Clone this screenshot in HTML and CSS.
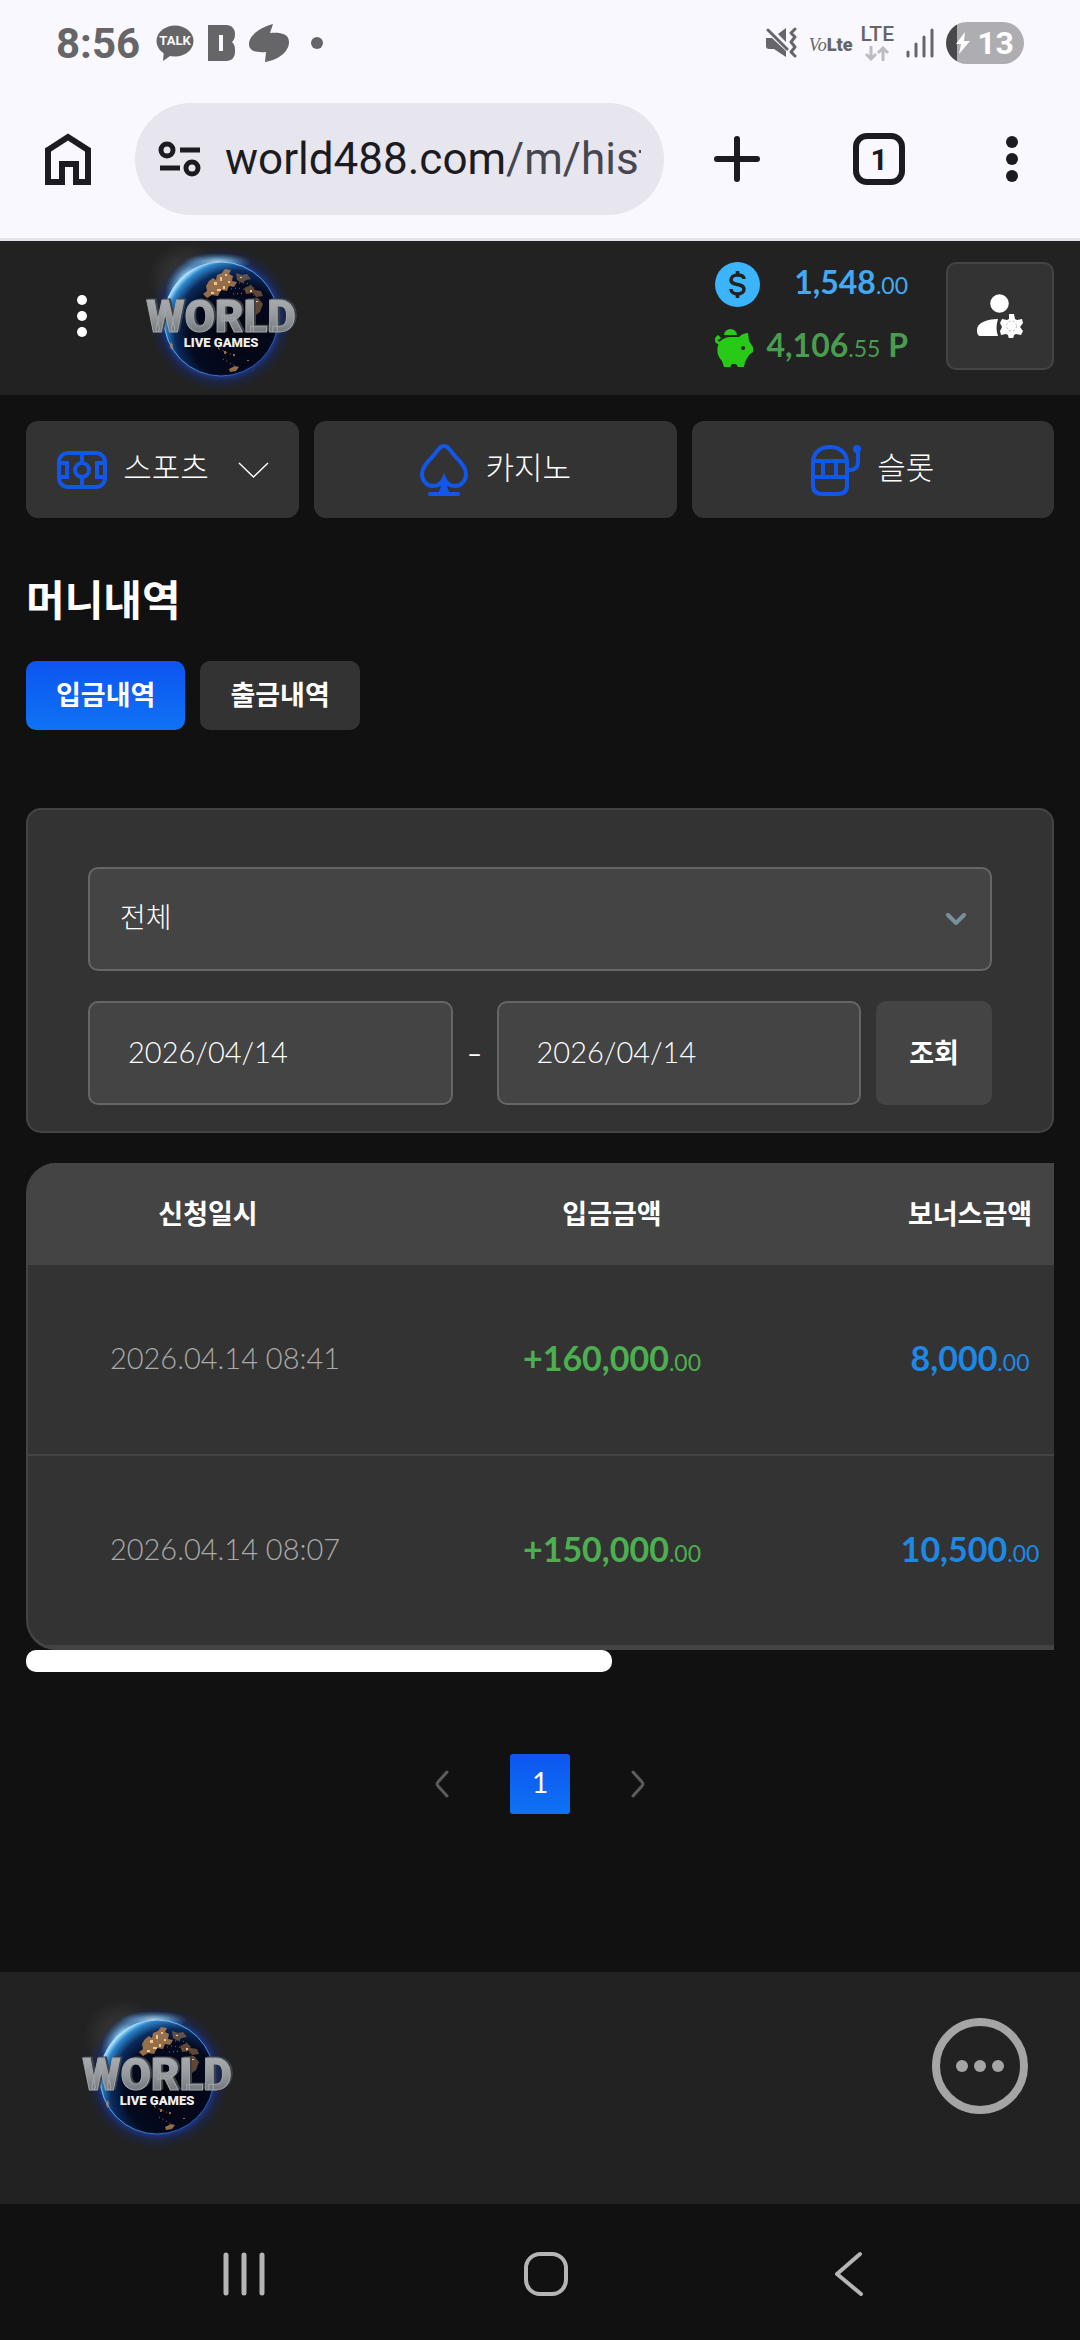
FILE: index.html
```html
<!DOCTYPE html>
<html lang="ko">
<head>
<meta charset="utf-8">
<meta name="viewport" content="width=device-width, initial-scale=1">
<title>머니내역</title>
<link rel="stylesheet" href="styles.css">
</head>
<body>
<svg class="defs" width="0" height="0" aria-hidden="true">
  <defs>
    <radialGradient id="glow"><stop offset=".78" stop-color="#1c3fa8" stop-opacity=".85"/><stop offset=".88" stop-color="#16286a" stop-opacity=".4"/><stop offset="1" stop-color="#16286a" stop-opacity="0"/></radialGradient>
    <radialGradient id="shine"><stop offset="0" stop-color="#f4fff8"/><stop offset=".4" stop-color="#8fd0ee" stop-opacity=".8"/><stop offset="1" stop-color="#4a9ad8" stop-opacity="0"/></radialGradient>
    <radialGradient id="halo"><stop offset="0" stop-color="#fff" stop-opacity=".14"/><stop offset="1" stop-color="#fff" stop-opacity="0"/></radialGradient>
    <radialGradient id="earth" cx=".64" cy=".62" r=".68"><stop offset="0" stop-color="#02030c"/><stop offset=".62" stop-color="#040a20"/><stop offset=".8" stop-color="#0a2a5c"/><stop offset=".93" stop-color="#2d86cc"/><stop offset="1" stop-color="#b8ecff"/></radialGradient>
    <linearGradient id="steel" x1="0" y1="0" x2="0" y2="1"><stop offset="0" stop-color="#b4b6b8"/><stop offset=".5" stop-color="#94989c"/><stop offset="1" stop-color="#596268"/></linearGradient>
    <linearGradient id="rim" x1="0" y1="0" x2="1" y2="1"><stop offset="0" stop-color="#d8f6ff"/><stop offset=".4" stop-color="#5cb2ee"/><stop offset="1" stop-color="#1c3c9c"/></linearGradient>
  </defs>
  <symbol id="globe" viewBox="0 0 160 150">
    <circle cx="45" cy="38" r="38" fill="url(#halo)"/>
    <circle cx="80" cy="78" r="72" fill="url(#glow)"/>
    <ellipse cx="47" cy="39" rx="17" ry="29" transform="rotate(43 47 39)" fill="url(#shine)"/>
    <ellipse cx="77" cy="21" rx="34" ry="9" fill="url(#shine)" opacity=".75"/>
    <circle cx="80" cy="78" r="57" fill="url(#earth)" stroke="url(#rim)" stroke-width="1"/>
    <g fill="#b98652">
      <path d="M68 40l4-3 3 2 1-5 5-2 3-4 6 1-2 4 4 2-1 5 5 1-3 5-5-1-2 5-6-1-3 6-6-1-5 3-4-4 4-3-1-5z" opacity=".8"/>
      <path d="M95 32l6 2 5-1 4 5-5 1-4 3-5-3zM103 47l7-3 4 5 6 1 2 5-7 1-3-4-7 1zM108 58l9-1 5 6-3 8-7 5-4-7z" opacity=".5"/>
      <path d="M88 128l6-3 4 1-3 4-6 1zM83 110h2v3h-2zM92 113h2v2h-2zM77 106h1v2h-1zM106 119h2v1h-2zM30 101l2 3-1 5-2-3z" opacity=".8"/>
    </g>
    <g fill="#f1c48b"><path d="M73 41h3v3h-3zM79 36h2v4h-2zM84 33h2v2h-2zM76 48h4v2h-4zM87 40h2v2h-2zM70 51h3v2h-3zM99 36h2v1h-2zM109 49h2v2h-2zM112 65h2v2h-2zM115 60h2v1h-2zM82 45h2v3h-2z"/></g>
    <g fill="none" stroke="#a3784c" stroke-width="1" stroke-dasharray="1 3"><path d="M90 48q15-4 28 12M94 43q13-4 20 5M92 53l12-1M78 108l18 8M84 104l14-2M82 118l12 7"/></g>
  </symbol>
</svg>

<header class="browser">
  <div class="status">
    <div class="status-left">
      <span class="clock">8:56</span>
      <svg width="38" height="38" viewBox="0 0 38 38"><ellipse cx="19" cy="17" rx="18.500" ry="15.500" fill="#666668"/><path d="M8 26L7 37l10-7z" fill="#666668"/><text class="talk" x="19" y="21" text-anchor="middle">TALK</text></svg>
      <svg width="27" height="38" viewBox="0 0 27 38"><path fill="#666668" fill-rule="evenodd" d="M0 1h18c6 0 9 4 9 9 0 4-1 6-3 8 2 2 3 4 3 8v2c0 5-3 9-9 9H0zM11 11v16h4V11z"/></svg>
      <svg width="40" height="38" viewBox="0 0 40 38"><path fill="#666668" d="M24 0C12 3 0 11 0 20c0 7 7 9 17 8l-1 10c13-2 24-10 24-20 0-8-8-10-19-9z"/></svg>
      <svg class="more-dot" width="12" height="12" viewBox="0 0 12 12"><circle cx="6" cy="6" r="6" fill="#666668"/></svg>
    </div>
    <div class="status-right">
      <svg width="31" height="32" viewBox="0 0 31 32"><g fill="#666668"><path d="M20 1v14L12 7z"/><path d="M0 11h6l14 13v6L8 22H3q-3 0-3-3z"/></g><path d="M3 4l19 18" stroke="#f9f8ff" stroke-width="5"/><path d="M2 3l19 19" stroke="#666668" stroke-width="3" stroke-linecap="round"/><path d="M29 2l-4 4 4 4-4 5 4 5-4 5 4 4" fill="none" stroke="#666668" stroke-width="3" stroke-linecap="round" stroke-linejoin="round"/></svg>
      <span class="volte"><i>Vo</i><b>Lte</b></span>
      <span class="lte">LTE
        <svg width="26" height="15" viewBox="0 0 26 15"><path d="M7 0v12M2 8l5 5 5-5M19 15V2M14 7l5-5 5 5" fill="none" stroke="#bdbcc3" stroke-width="3"/></svg>
      </span>
      <svg width="28" height="30" viewBox="0 0 28 30"><path d="M2 24v4M10 16v12M18 9v19M26 2v26" stroke="#666668" stroke-width="3" stroke-linecap="round"/></svg>
      <span class="battery"><svg width="14" height="22" viewBox="0 0 14 22"><path d="M9 0L0 12h5L3 22 14 9H8z" fill="#fff"/></svg>13</span>
    </div>
  </div>
  <div class="toolbar">
    <button class="tool" aria-label="홈"><svg width="46" height="52" viewBox="0 0 46 52"><path d="M3 17L23 4l20 13v32H31V31H17v18H3z" fill="none" stroke="#1b1b21" stroke-width="6"/></svg></button>
    <a class="address" href="#">
      <svg width="43" height="38" viewBox="0 0 43 38"><g fill="none" stroke="#1b1b21" stroke-width="5"><circle cx="9" cy="10" r="6"/><circle cx="34" cy="28" r="6"/><path d="M22 10h20M2 28h20"/></g></svg>
      <span class="url">world488.com<span class="path">/m/history</span></span>
    </a>
    <div class="tool-group">
      <button class="tool" aria-label="새 탭"><svg width="46" height="46" viewBox="0 0 46 46"><path d="M23 3v40M3 23h40" stroke="#1b1b21" stroke-width="6" stroke-linecap="round"/></svg></button>
      <button class="tab-count" aria-label="탭">1</button>
      <button class="tool" aria-label="메뉴"><svg width="12" height="48" viewBox="0 0 12 48"><g fill="#1b1b21"><circle cx="6" cy="7" r="6"/><circle cx="6" cy="24" r="6"/><circle cx="6" cy="41" r="6"/></g></svg></button>
    </div>
  </div>
</header>

<div class="site-header">
  <button class="menu" aria-label="전체 메뉴"><svg width="12" height="44" viewBox="0 0 12 44"><g fill="#fff"><circle cx="6" cy="6" r="5"/><circle cx="6" cy="22" r="5"/><circle cx="6" cy="38" r="5"/></g></svg></button>
  <a class="logo" href="#">
    <svg width="160" height="150" viewBox="0 0 160 150"><use href="#globe"/><text class="logo-word" x="80" y="91" text-anchor="middle">WORLD</text><text class="logo-sub" x="80" y="106" text-anchor="middle">LIVE GAMES</text></svg>
  </a>
  <div class="balances">
    <div class="balance cash">
      <svg width="45" height="45" viewBox="0 0 45 45"><circle cx="22.500" cy="22.500" r="22.500" fill="#3cb4fb"/><path d="M29 17c0-3-3-4-6.500-4S16 15 16 18c0 6 13 3 13 9 0 3-3 5-6.500 5S16 30 16 27M22.500 9v5M22.500 31v5" fill="none" stroke="#222" stroke-width="3.600"/></svg>
      <span>1,548<small>.00</small></span>
    </div>
    <div class="balance point">
      <svg width="38" height="40" viewBox="0 0 38 40"><path d="M9 7a6.500 6 0 0 1 13 0z" fill="#29c917"/><path d="M5 15C1 15 0 11 3 9l2 2" fill="none" stroke="#29c917" stroke-width="3"/><path fill="#29c917" fill-rule="evenodd" d="M4 15c3-5 8-6 13-6h7c3-3 6-4 9-4l1 8 4 6v5l-4 3-4 7-1 5h-6l-2-3h-4l-2 3H9l-2-6c-5-5-6-12-3-18zM28 18a2 2 0 1 0 .1 4 2 2 0 0 0 0-4z"/></svg>
      <span>4,106<small>.55</small> P</span>
    </div>
  </div>
  <button class="account" aria-label="내 정보"><svg width="46" height="44" viewBox="0 0 46 44"><g fill="#fff"><circle cx="22.500" cy="9.500" r="9.300"/><path d="M21 25c-12 0-21 4-21 11 0 4 1 6 4 6h17c-2-5-2-11 0-17z"/><path d="M32 20h5l1 5 2 1 5-1 1 4-3 4 3 4-2 4-5-1-2 1-1 4h-4l-1-4-2-1-5 1-1-4 2-4-2-4 2-4 5 1 2-1z"/></g><circle cx="34.500" cy="32" r="5" fill="none" stroke="#bbb" stroke-width="1" stroke-dasharray="2 2"/></svg></button>
</div>

<main>
  <nav class="games">
    <button class="game sports">
      <svg width="52" height="40" viewBox="0 0 52 40"><g fill="none" stroke="#1257e8" stroke-width="4"><rect x="3" y="3" width="46" height="34" rx="9"/><path d="M3 13h8v14H3M49 13h-8v14h8M26 3v10M26 27v10"/><circle cx="26" cy="20" r="7"/></g></svg>
      <span>스포츠</span>
      <svg class="caret" width="31" height="16" viewBox="0 0 31 16"><path d="M1 1l14.500 14L30 1" fill="none" stroke="#fff" stroke-width="1.400"/></svg>
    </button>
    <a class="game" href="#">
      <svg width="50" height="54" viewBox="0 0 50 54"><path d="M25 3c-4 0-6 4-10 9S3 23 3 31c0 7 5 12 11 12 5 0 9-3 11-8 2 5 6 8 11 8 6 0 11-5 11-12 0-8-8-14-12-19S29 3 25 3zM11 51h28" fill="none" stroke="#1257e8" stroke-width="4" stroke-linecap="round"/><path d="M25 32l3 8q0 8 5 12H17q5-4 5-12z" fill="#1257e8"/></svg>
      <span>카지노</span>
    </a>
    <a class="game" href="#">
      <svg width="50" height="52" viewBox="0 0 50 52"><g fill="none" stroke="#1257e8" stroke-width="4"><path d="M2 19C2 8 10 3 19 3s17 5 17 16v22q0 9-9 9H11q-9 0-9-9zM2 17h34M2 33h34M12 17v16M25 17v16M36 26h2q9 0 9-8V5"/></g><circle cx="46" cy="5" r="4" fill="#1257e8"/></svg>
      <span>슬롯</span>
    </a>
  </nav>

  <h1>머니내역</h1>
  <div class="tabs">
    <button class="tab active">입금내역</button>
    <button class="tab">출금내역</button>
  </div>

  <form class="filter">
    <div class="select-box">
      <select aria-label="구분"><option>전체</option></select>
      <svg width="20" height="13" viewBox="0 0 20 13"><path d="M2 2l8 8 8-8" fill="none" stroke="#78909c" stroke-width="4" stroke-linecap="round" stroke-linejoin="round"/></svg>
    </div>
    <div class="range">
      <input type="text" aria-label="시작일" value="2026/04/14">
      <span class="dash">–</span>
      <input type="text" aria-label="종료일" value="2026/04/14">
      <button type="button" class="search">조회</button>
    </div>
  </form>

  <div class="records">
    <table>
      <colgroup><col class="col-date"><col class="col-sum"><col class="col-sum"></colgroup>
      <thead><tr><th class="date-head">신청일시</th><th>입금금액</th><th>보너스금액</th></tr></thead>
      <tbody>
        <tr><td class="date">2026.04.14 08:41</td><td class="deposit">+160,000<small>.00</small></td><td class="bonus">8,000<small>.00</small></td></tr>
        <tr><td class="date">2026.04.14 08:07</td><td class="deposit">+150,000<small>.00</small></td><td class="bonus">10,500<small>.00</small></td></tr>
      </tbody>
    </table>
  </div>
  <div class="scroll-track"><div class="scroll-thumb"></div></div>

  <nav class="pages" aria-label="페이지">
    <button aria-label="이전"><svg width="14" height="28" viewBox="0 0 14 28"><path d="M12 2L3 12q-2 2 0 4l9 10" fill="none" stroke="#5c5c5c" stroke-width="3" stroke-linecap="round"/></svg></button>
    <button class="current">1</button>
    <button aria-label="다음"><svg width="14" height="28" viewBox="0 0 14 28"><path d="M2 2l9 10q2 2 0 4L2 26" fill="none" stroke="#5c5c5c" stroke-width="3" stroke-linecap="round"/></svg></button>
  </nav>
</main>

<footer>
  <a class="logo" href="#">
    <svg width="160" height="150" viewBox="0 0 160 150"><use href="#globe"/><text class="logo-word" x="80" y="91" text-anchor="middle">WORLD</text><text class="logo-sub" x="80" y="106" text-anchor="middle">LIVE GAMES</text></svg>
  </a>
  <button class="more" aria-label="더보기"><svg width="96" height="96" viewBox="0 0 96 96"><circle cx="48" cy="48" r="44" fill="none" stroke="#a5a5a5" stroke-width="8"/><g fill="#a5a5a5"><circle cx="30" cy="48" r="6"/><circle cx="48" cy="48" r="6"/><circle cx="66" cy="48" r="6"/></g></svg></button>
</footer>

<nav class="system" aria-label="시스템">
  <button aria-label="최근 앱"><svg width="42" height="46" viewBox="0 0 42 46"><path d="M3 4v38M21 4v38M39 4v38" stroke="#b5b5b5" stroke-width="5" stroke-linecap="round"/></svg></button>
  <button aria-label="홈"><svg width="46" height="46" viewBox="0 0 46 46"><rect x="3" y="3" width="40" height="40" rx="14" fill="none" stroke="#b5b5b5" stroke-width="4"/></svg></button>
  <button aria-label="뒤로"><svg width="30" height="46" viewBox="0 0 30 46"><path d="M27 3L4 23l24 20" fill="none" stroke="#b5b5b5" stroke-width="4" stroke-linecap="round" stroke-linejoin="round"/></svg></button>
</nav>
</body>
</html>
```
FILE: styles.css
```css
* { box-sizing: border-box; }

body {
  margin: 0;
  min-height: 100vh;
  display: flex;
  flex-direction: column;
  background: #111;
  color: #fff;
  font-family: Lato, "Noto Sans CJK KR", sans-serif;
  font-size: 30px;
}

button {
  margin: 0;
  padding: 0;
  border: 0;
  background: none;
  color: inherit;
  font: inherit;
  display: flex;
  align-items: center;
  justify-content: center;
}

a { color: inherit; text-decoration: none; }
svg { display: block; flex: none; }
.defs { position: absolute; }

/* Browser chrome */
.browser {
  background: #f9f8ff;
  border-bottom: 3px solid #e3e2ea;
  color: #1b1b21;
  font-family: Roboto, sans-serif;
}

.status {
  height: 86px;
  padding: 0 56px;
  display: flex;
  align-items: center;
  justify-content: space-between;
  color: #666668;
}

.status-left, .status-right { display: flex; align-items: center; gap: 14px; }
.status-right { gap: 12px; }
.clock { font-size: 42px; font-weight: 700; margin-right: 2px; }
.more-dot { margin-left: 8px; }
.talk { font: 700 13px Roboto, sans-serif; fill: #f9f8ff; }
.volte { font-size: 18px; line-height: 24px; padding-top: 4px; }
.volte i { font-family: "Liberation Serif", serif; }
.volte b { font-weight: 900; }
.lte {
  display: flex;
  flex-direction: column;
  align-items: center;
  gap: 4px;
  font-size: 21px;
  line-height: 16px;
  font-weight: 500;
  margin-left: -4px;
}
.battery {
  width: 78px;
  height: 42px;
  border-radius: 21px;
  background: linear-gradient(90deg, #48484a 11px, #aeadb2 11px);
  color: #fff;
  font-size: 32px;
  font-weight: 700;
  display: flex;
  align-items: center;
  justify-content: center;
  gap: 7px;
}

.toolbar {
  padding: 17px 62px 23px 45px;
  display: flex;
  align-items: center;
}
.address {
  flex: 1;
  min-width: 0;
  height: 112px;
  margin-left: 44px;
  padding: 0 23px;
  border-radius: 56px;
  background: #e7e6ef;
  display: flex;
  align-items: center;
  gap: 24px;
}
.url { flex: 1; min-width: 0; overflow: hidden; white-space: nowrap; font-size: 44px; }
.path { color: #45464f; }
.tool-group { width: 354px; padding-left: 50px; display: flex; align-items: center; justify-content: space-between; }
.tab-count {
  width: 52px;
  height: 52px;
  margin-right: 8px;
  border: 6px solid #1b1b21;
  border-radius: 14px;
  font-size: 30px;
  font-weight: 700;
}

/* Site header */
.site-header {
  min-height: 154px;
  padding: 0 26px 4px 52px;
  background: #222;
  display: flex;
  align-items: center;
}
.menu { width: 60px; height: 60px; margin-right: 29px; }
.logo-word {
  font: 900 44px Roboto, sans-serif;
  fill: url(#steel);
  stroke: #a2a5a8;
  stroke-width: 1px;
  filter: drop-shadow(2px -1px 0 #3d4246);
}
.logo-sub { font: 900 13px Roboto, sans-serif; fill: #eee; }
.balances { width: 193px; margin: 0 38px 0 auto; display: grid; gap: 18px; }
.balance {
  height: 45px;
  display: flex;
  align-items: center;
  justify-content: space-between;
  font-size: 32px;
  line-height: 40px;
  font-weight: 700;
  white-space: nowrap;
}
.balance span { padding-bottom: 2px; }
small { font-size: 23px; font-weight: 400; }
.cash { color: #42aaf5; }
.point { color: #4a9d4e; }
.account {
  width: 108px;
  height: 108px;
  border: 2px solid #444;
  border-radius: 10px;
  background: #333;
}

/* Page */
main { padding: 26px 26px 158px; }
.games { display: flex; gap: 15px; }
.game {
  flex: 1;
  height: 97px;
  border-radius: 12px;
  background: #333;
  display: flex;
  align-items: center;
  justify-content: center;
  gap: 16px;
  font-size: 31px;
  font-weight: 300;
}
.game span { padding-bottom: 8px; }
.sports { flex: 0 0 273px; gap: 15px; }
.caret { margin-left: 14px; }

h1 { margin: 52px 0 31px; font-size: 42px; line-height: 60px; font-weight: 700; }
.tabs { display: flex; gap: 15px; }
.tab {
  height: 69px;
  padding: 0 30px 4px;
  border-radius: 10px;
  background: #333;
  font-size: 27px;
  font-weight: 700;
}
.tab.active, .current { background: linear-gradient(#0d55f0, #0f72f5); }

.filter {
  margin-top: 78px;
  padding: 57px 60px 26px;
  border: 2px solid #444;
  border-radius: 15px;
  background: #333;
}
.select-box { display: grid; align-items: center; margin-bottom: 30px; }
.select-box > * { grid-area: 1 / 1; }
.select-box svg { justify-self: end; margin-right: 26px; }
select, input {
  width: 100%;
  min-width: 0;
  height: 104px;
  margin: 0;
  border: 2px solid #666;
  border-radius: 10px;
  background: #444;
  color: #fff;
  font: inherit;
  font-weight: 300;
  appearance: none;
}
select { padding: 0 30px 4px; font-size: 28px; }
input { flex: 1; padding: 0 38px 4px; font-size: 29px; }
.range { display: flex; align-items: center; }
.dash { width: 44px; text-align: center; font-size: 26px; }
.search {
  width: 116px;
  height: 104px;
  margin-left: 15px;
  padding-bottom: 4px;
  border-radius: 10px;
  background: #444;
  font-size: 27px;
  font-weight: 700;
}

.records {
  margin-top: 30px;
  overflow: hidden;
  border-left: 2px solid #444;
  border-bottom: 3px solid #444;
  border-radius: 30px 0 0 30px;
  background: #333;
}
table { width: 1121px; table-layout: fixed; border-collapse: separate; border-spacing: 0; }
.col-date { width: 405px; }
.col-sum { width: 358px; }
th { height: 102px; padding: 0 0 4px; background: #444; font-size: 27px; font-weight: 700; }
td { height: 191px; padding: 0 0 4px; text-align: center; border-bottom: 2px solid #444; font-size: 34px; font-weight: 700; }
.date-head { padding-right: 45px; }
.date { padding-right: 11px; font-size: 29px; font-weight: 300; color: #aaa; }
.deposit { color: #4caf50; }
.bonus { color: #1e88e5; }
.scroll-track { height: 22px; }
.scroll-thumb { width: 57%; height: 22px; border-radius: 10px; background: #fff; }

.pages { margin-top: 82px; display: flex; align-items: center; justify-content: center; gap: 48px; }
.pages button { width: 40px; height: 60px; }
.pages .current { width: 60px; padding-bottom: 4px; border-radius: 3px; font-size: 28px; font-weight: 400; }

footer {
  min-height: 232px;
  padding: 27px 52px 0 77px;
  background: #222;
  display: flex;
  align-items: flex-start;
  justify-content: space-between;
}
.more { margin-top: 19px; }

.system {
  min-height: 135px;
  padding: 8px 81px 4px 93px;
  display: grid;
  grid-template-columns: repeat(3, 1fr);
}
```
